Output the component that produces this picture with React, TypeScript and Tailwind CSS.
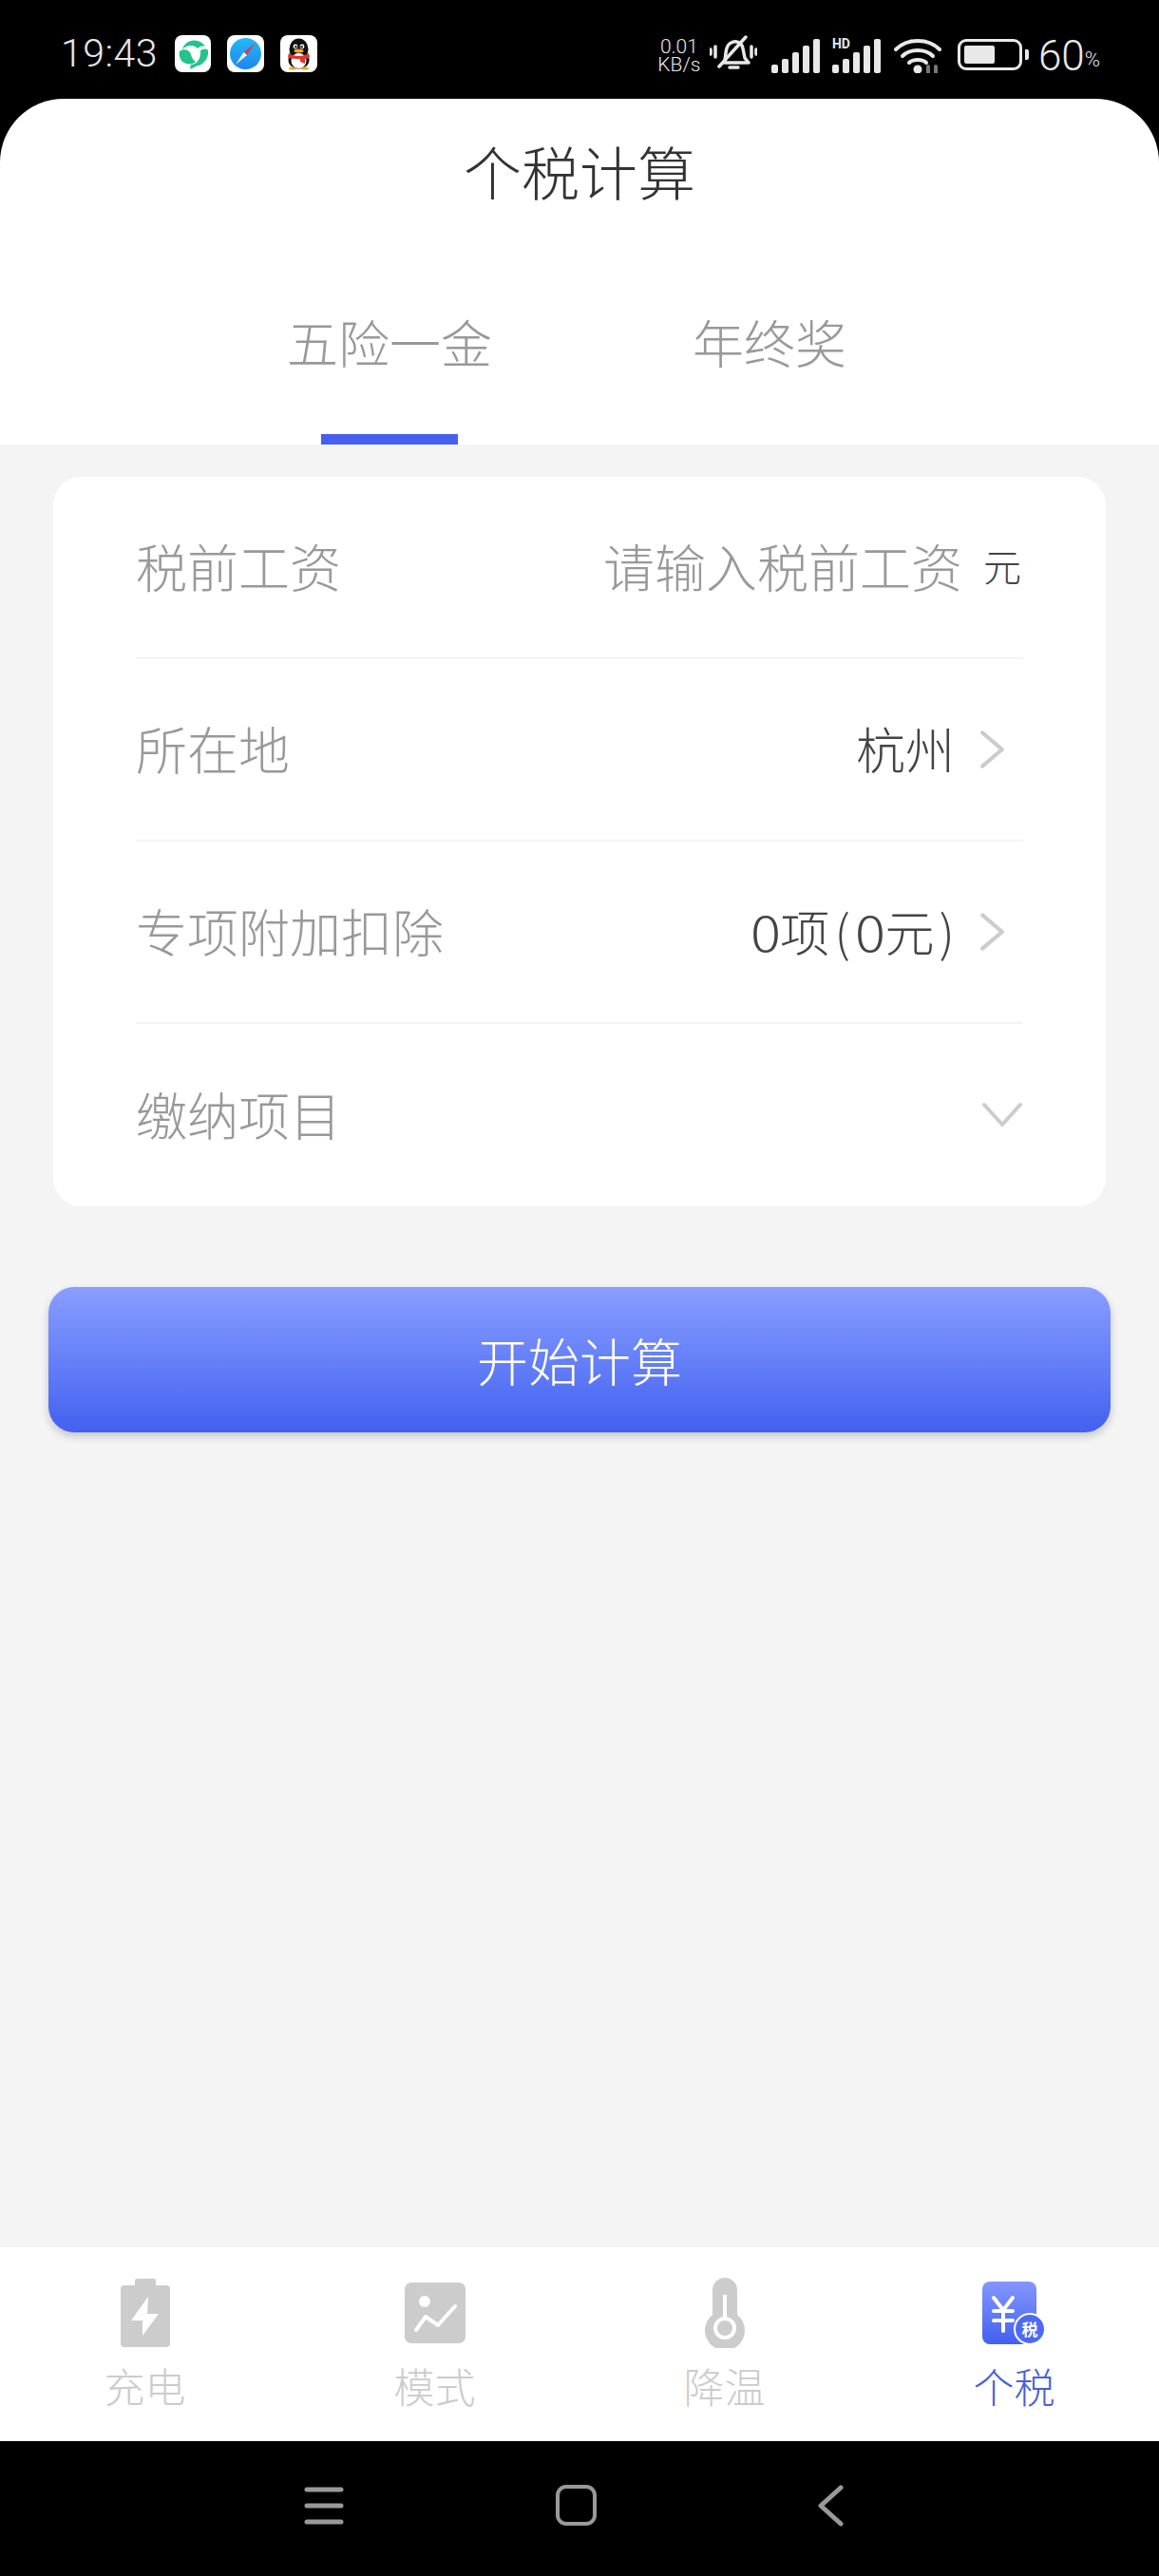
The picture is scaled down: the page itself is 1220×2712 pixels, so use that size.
import React from "react";

const Chevron = ({ className }: { className?: string }) => (
  <svg viewBox="0 0 26 40" className={className} fill="none" stroke="#cccccc" strokeWidth="4" strokeLinecap="round" strokeLinejoin="round">
    <path d="M3 3 L23 20 L3 37" />
  </svg>
);

const Bars = () => (
  <svg viewBox="0 0 52 36" className="h-[36px] w-[52px]" fill="#e8e8e8">
    <rect x="0" y="27" width="7" height="9" rx="2" />
    <rect x="11" y="21" width="7" height="15" rx="2" />
    <rect x="22" y="14" width="7" height="22" rx="2" />
    <rect x="33" y="7" width="7" height="29" rx="2" />
    <rect x="44" y="0" width="7" height="36" rx="2" />
  </svg>
);

function StatusBar() {
  return (
    <div className="flex h-[104px] shrink-0 items-start justify-between bg-black pl-[64px] pr-[62px] pt-[37px] text-[#e8e8e8]">
      <div className="flex items-center">
        <span className="w-[120px] text-[41px] font-light leading-[39px] tracking-[0.5px] font-['Roboto',sans-serif]">19:43</span>
        <div className="flex gap-[17px]">
          <div className="h-[39px] w-[38px] rounded-[8px] bg-white">
            <svg viewBox="0 0 38 39" className="h-full w-full" fill="none">
              <path d="M8 15 C10 8 17 4 24 6 C28 7 30 9 32 12 C28 11 26 12 24 14 C20 10 13 10 8 15 Z" fill="#22c48a" />
              <path d="M27 16 C30 14 33 14 35 16 C36 24 31 31 22 33 L16 36 L17 31 C22 31 28 26 27 16 Z" fill="#22c48a" />
              <path d="M5 17 C9 14 15 15 17 20 C18 24 19 26 22 28 C17 32 11 31 7 27 C5 24 4 20 5 17 Z" fill="#22c48a" />
            </svg>
          </div>
          <div className="h-[39px] w-[39px] rounded-[8px] bg-white">
            <svg viewBox="0 0 39 39" className="h-full w-full">
              <defs>
                <linearGradient id="sf" x1="0" y1="0" x2="0" y2="1">
                  <stop offset="0" stopColor="#25b9f5" />
                  <stop offset="1" stopColor="#1e86f0" />
                </linearGradient>
              </defs>
              <circle cx="19.5" cy="19.5" r="16.5" fill="url(#sf)" />
              <path d="M30 8 L21 21 L17.5 18 Z" fill="#c9455f" />
              <path d="M9 31 L17.5 18 L21 21 Z" fill="#f2f6fa" />
            </svg>
          </div>
          <div className="h-[39px] w-[39px] rounded-[8px] bg-white">
            <svg viewBox="0 0 39 39" className="h-full w-full">
              <ellipse cx="19.5" cy="15" rx="10" ry="11.5" fill="#111" />
              <ellipse cx="19.5" cy="26" rx="11" ry="9.5" fill="#111" />
              <ellipse cx="19.5" cy="27" rx="8" ry="8" fill="#fff" />
              <circle cx="16" cy="12" r="2.4" fill="#fff" />
              <circle cx="23" cy="12" r="2.4" fill="#fff" />
              <circle cx="16.4" cy="12.3" r="1.2" fill="#111" />
              <circle cx="22.6" cy="12.3" r="1.2" fill="#111" />
              <ellipse cx="19.5" cy="16.5" rx="5" ry="2" fill="#f5a623" />
              <path d="M9 19 C15 23 24 23 30 19 L31 23 C29 25 27 25 26 25 L26 30 L21 28 L21 25 C15 25 11 25 8 23 Z" fill="#e0352b" />
              <ellipse cx="13" cy="35" rx="4" ry="1.6" fill="#f5a623" />
              <ellipse cx="26" cy="35" rx="4" ry="1.6" fill="#f5a623" />
            </svg>
          </div>
        </div>
      </div>
      <div className="flex items-start font-['Roboto',sans-serif]">
        <div className="mt-[3px] flex w-[44px] flex-col items-center text-[21px] font-light leading-[19px]">
          <span>0.01</span>
          <span>KB/s</span>
        </div>
        <svg viewBox="0 0 50 40" className="ml-[10px] h-[40px] w-[50px]" fill="none" stroke="#e8e8e8" strokeWidth="3.5" strokeLinecap="round" strokeLinejoin="round">
          <path d="M15 29 C18 24 15 14 21 9 C27 4 34 8 35 14 L37 24 L41 29 Z" />
          <path d="M21 34 L30 34" />
          <path d="M10 33 L38 2" />
          <path d="M1 15 L1 20 M6 12 L6 23 M44 12 L44 23 M49 15 L49 20" />
        </svg>
        <div className="ml-[15px] mt-[4px]"><Bars /></div>
        <div className="relative ml-[12px] mt-[4px]">
          <Bars />
          <span className="absolute left-0 top-[-2px] text-[14px] font-bold leading-[14px]">HD</span>
        </div>
        <svg viewBox="0 0 50 36" className="ml-[13px] mt-[4px] h-[36px] w-[50px]" fill="none" stroke="#e8e8e8" strokeWidth="4" strokeLinecap="round">
          <path d="M2 11 C14 -1 36 -1 48 11" />
          <path d="M9 18 C17 10 33 10 41 18" />
          <path d="M16 25 C20 21 30 21 34 25" />
          <circle cx="25" cy="32" r="2.5" fill="#e8e8e8" />
          <path d="M36 35 L36 29 M44 35 L44 29" stroke="#777" />
        </svg>
        <div className="ml-[17px] mt-[4px] flex items-center">
          <div className="h-[33px] w-[68px] rounded-[9px] border-[3px] border-[#e8e8e8] p-[4px]">
            <div className="h-full w-[60%] rounded-[2px] bg-[#e8e8e8]" />
          </div>
          <div className="ml-[3px] h-[11px] w-[4px] rounded-r-[2px] bg-[#e8e8e8]" />
        </div>
        <span className="ml-[10px] mt-[3px] text-[44px] font-light leading-[39px]">60</span>
        <span className="mt-[14px] text-[22px] font-light leading-[24px]">%</span>
      </div>
    </div>
  );
}

function Header() {
  return (
    <div className="flex h-[364px] shrink-0 flex-col rounded-t-[67px] bg-white">
      <div className="mt-[40px] text-center text-[61px] font-light leading-[72px] text-[#333333]">个税计算</div>
      <div className="mt-[64px] flex flex-1 justify-center">
        <div className="flex w-[400px] flex-col items-center justify-between">
          <span className="mt-[48px] text-[54px] font-light leading-[64px] text-[#999999]">五险一金</span>
          <div className="h-[11px] w-[144px] bg-[#4660ee]" />
        </div>
        <div className="w-[400px] text-center">
          <div className="mt-[48px] text-[54px] font-light leading-[64px] text-[#999999]">年终奖</div>
        </div>
      </div>
    </div>
  );
}

function Row({ label, children, last }: { label: string; children: React.ReactNode; last?: boolean }) {
  return (
    <div className={`flex h-[192px] items-center justify-between ${last ? "" : "border-b-2 border-[#f4f4f4]"}`}>
      <span className="mb-[4px] text-[54px] font-light text-[#999999]">{label}</span>
      {children}
    </div>
  );
}

const tabs = [
  {
    label: "充电",
    icon: (
      <svg viewBox="0 0 52 72" className="h-[72px] w-[52px]">
        <path d="M15 2 Q15 0 17 0 L35 0 Q37 0 37 2 L37 7 L48 7 Q52 7 52 11 L52 68 Q52 72 48 72 L4 72 Q0 72 0 68 L0 11 Q0 7 4 7 L15 7 Z" fill="#cccccc" />
        <path d="M29 19 L11 44 L23 44 L23 60 L40 37 L28 37 Z" fill="#ffffff" />
      </svg>
    ),
  },
  {
    label: "模式",
    icon: (
      <svg viewBox="0 0 64 64" className="h-[64px] w-[64px]">
        <rect width="64" height="64" rx="7" fill="#cccccc" />
        <circle cx="21" cy="20" r="6" fill="#ffffff" />
        <path d="M12 50 L22 36 L35 45 L53 25" fill="none" stroke="#ffffff" strokeWidth="4" strokeLinecap="round" strokeLinejoin="round" />
      </svg>
    ),
  },
  {
    label: "降温",
    icon: (
      <svg viewBox="0 0 42 74" className="h-[74px] w-[42px]">
        <path d="M8 13 A13 13 0 0 1 34 13 L34 39 A21 21 0 1 1 8 39 Z" fill="#cccccc" />
        <rect x="19" y="18" width="4" height="30" fill="#ffffff" />
        <circle cx="21" cy="53" r="10" fill="#cccccc" stroke="#ffffff" strokeWidth="4" />
      </svg>
    ),
  },
  {
    label: "个税",
    active: true,
    icon: (
      <svg viewBox="0 0 68 66" className="h-[66px] w-[68px]">
        <defs>
          <linearGradient id="tax" x1="0" y1="0" x2="0" y2="1">
            <stop offset="0" stopColor="#8397ff" />
            <stop offset="1" stopColor="#4360f0" />
          </linearGradient>
        </defs>
        <rect width="57" height="66" rx="8" fill="url(#tax)" />
        <path d="M12 17 L22 30 L32 17 M12 31 L32 31 M12 41 L32 41 M22 30 L22 52" fill="none" stroke="#ffffff" strokeWidth="4" strokeLinecap="round" strokeLinejoin="round" />
        <circle cx="50" cy="50" r="16" fill="#4f6af2" stroke="#ffffff" strokeWidth="2" />
        <text x="50" y="56.5" textAnchor="middle" fontSize="17" fontWeight="700" fill="#ffffff" fontFamily="'Noto Sans CJK SC', sans-serif">税</text>
      </svg>
    ),
  },
];

function TabBar() {
  return (
    <div className="grid h-[204px] shrink-0 grid-cols-4 bg-white">
      {tabs.map((t) => (
        <div key={t.label} className="flex flex-col items-center">
          <div className="mt-[31px] flex h-[76px] items-center justify-center">{t.icon}</div>
          <span className={`mt-[14px] text-[43px] font-light leading-[48px] ${t.active ? "text-[#4660d8]" : "text-[#cccccc]"}`}>{t.label}</span>
        </div>
      ))}
    </div>
  );
}

function NavBar() {
  return (
    <div className="flex h-[142px] shrink-0 items-start bg-black pl-[320px] pt-[48px]">
      <svg viewBox="0 0 42 40" className="h-[40px] w-[42px]" fill="none" stroke="#999999" strokeWidth="5" strokeLinecap="round">
        <path d="M3 3 L39 3 M3 20 L39 20 M3 37 L39 37" />
      </svg>
      <div className="ml-[223px] mt-[-2px] h-[43px] w-[43px] rounded-[11px] border-[4px] border-[#999999]" />
      <svg viewBox="0 0 28 44" className="ml-[232px] mt-[-2px] h-[44px] w-[28px]" fill="none" stroke="#999999" strokeWidth="5" strokeLinecap="round" strokeLinejoin="round">
        <path d="M25 3 L4 22 L25 41" />
      </svg>
    </div>
  );
}

export default function App() {
  return (
    <div className="flex h-[2712px] w-[1220px] flex-col bg-black font-['Noto_Sans_CJK_SC',sans-serif]">
      <StatusBar />
      <Header />
      <main className="flex flex-1 flex-col bg-[#f4f4f4]">
        <div className="mx-[56px] mt-[34px] rounded-[30px] bg-white px-[87px]">
          <Row label="税前工资">
            <div className="mb-[4px] flex items-center">
              <span className="text-[54px] font-light text-[#999999]">请输入税前工资</span>
              <span className="ml-[22px] mr-[2px] text-[40px] font-light text-[#444444]">元</span>
            </div>
          </Row>
          <Row label="所在地">
            <div className="flex items-center">
              <span className="mb-[3px] text-[52px] font-light text-[#444444]">杭州</span>
              <Chevron className="ml-[26px] mr-[19px] h-[42px] w-[27px]" />
            </div>
          </Row>
          <Row label="专项附加扣除">
            <div className="flex items-center">
              <span className="mb-[3px] text-[52px] font-light text-[#444444]">
                <span className="mr-[2px] inline-block scale-x-[1.15]">0</span>项<span className="mx-[5px]">(</span><span className="mx-[2px] inline-block scale-x-[1.15]">0</span>元<span className="ml-[5px]">)</span>
              </span>
              <Chevron className="ml-[26px] mr-[19px] h-[42px] w-[27px]" />
            </div>
          </Row>
          <Row label="缴纳项目" last>
            <svg viewBox="0 0 44 28" className="h-[28px] w-[44px]" fill="none" stroke="#cccccc" strokeWidth="4" strokeLinecap="round" strokeLinejoin="round">
              <path d="M3 3 L22 24 L41 3" />
            </svg>
          </Row>
        </div>
        <div className="mx-[51px] mt-[85px] flex h-[153px] items-center justify-center rounded-[27px] bg-gradient-to-b from-[#8a9dff] to-[#4360f0] text-[54px] font-light text-white shadow-[0_4px_10px_rgba(0,0,0,0.2)]">
          开始计算
        </div>
      </main>
      <TabBar />
      <NavBar />
    </div>
  );
}
